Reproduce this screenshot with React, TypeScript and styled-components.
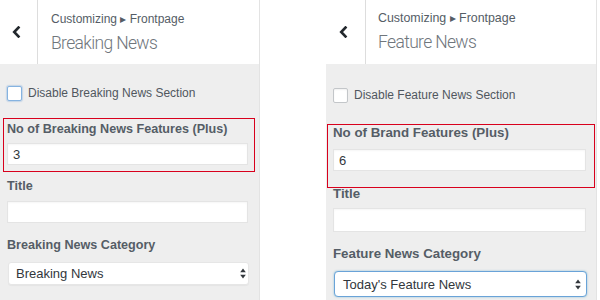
import React from "react";
import styled, { createGlobalStyle } from "styled-components";

const Global = createGlobalStyle`
  html, body { margin: 0; padding: 0; background: #fff; }
  body { font-family: "Liberation Sans", Arial, sans-serif; }
  * { box-sizing: border-box; }
`;

const Page = styled.div`
  display: flex;
  align-items: flex-start;
  width: 600px;
  height: 300px;
  overflow: hidden;
  background: #fff;
`;

const Panel = styled.section<{ $w: number; $ml: number }>`
  width: ${(p) => p.$w}px;
  margin-left: ${(p) => p.$ml}px;
  height: 300px;
  flex: none;
  display: flex;
  flex-direction: column;
  background: #eeeeee;
  border-right: 1px solid #e3e3e3;
  font-family: "Liberation Sans", Arial, sans-serif;
  color: #50575e;
`;

const Header = styled.header`
  height: 64px;
  flex: none;
  display: flex;
  background: #fff;
`;

const BackButton = styled.div<{ $w: number; $pr: number; $pt: number }>`
  width: ${(p) => p.$w}px;
  flex: none;
  display: flex;
  align-items: center;
  justify-content: center;
  padding-right: ${(p) => p.$pr}px;
  padding-top: ${(p) => p.$pt}px;
  border-right: 1px solid #dddddd;
`;

const TitleBlock = styled.div<{ $pl: number; $pt: number }>`
  display: flex;
  flex-direction: column;
  padding-left: ${(p) => p.$pl}px;
  padding-top: ${(p) => p.$pt}px;
`;

const Crumb = styled.div<{ $fs: number }>`
  font-size: ${(p) => p.$fs}px;
  line-height: 16px;
  color: #555d66;
`;

const Heading = styled.h2`
  margin: 4px 0 0;
  font-family: Roboto, "Liberation Sans", sans-serif;
  font-weight: 300;
  font-size: 17.5px;
  line-height: 24px;
  color: #70767c;
  letter-spacing: -0.65px;
`;

const Body = styled.div<{ $pr: number }>`
  display: flex;
  flex-direction: column;
  padding: 0 ${(p) => p.$pr}px 0 7px;
`;

const CheckRow = styled.label<{ $mt: number }>`
  display: flex;
  align-items: center;
  gap: 6px;
  margin-top: ${(p) => p.$mt}px;
  font-size: 12px;
  line-height: 16px;
  color: #50575e;
`;

const CheckBox = styled.span<{ $focus: boolean }>`
  width: 15px;
  height: 15px;
  flex: none;
  background: #fff;
  border: 1px solid ${(p) => (p.$focus ? "#86b3e0" : "#c3c6c9")};
  border-radius: 2px;
  box-shadow: ${(p) => (p.$focus ? "0 0 1px 1px rgba(120,170,220,.35)" : "inset 0 1px 2px rgba(0,0,0,.06)")};
`;

const Highlight = styled.div<{ $mt: number; $ml: number; $mr: number; $p: string }>`
  display: flex;
  flex-direction: column;
  margin-top: ${(p) => p.$mt}px;
  margin-left: ${(p) => p.$ml}px;
  margin-right: ${(p) => p.$mr}px;
  padding: ${(p) => p.$p};
  border-width: 1px;
  border-style: solid;
  border-color: #d8001c;
`;

const FieldLabel = styled.div<{ $fs: number; $mt: number }>`
  margin-top: ${(p) => p.$mt}px;
  font-size: ${(p) => p.$fs}px;
  font-weight: 700;
  line-height: 16px;
  color: #555d66;
  white-space: nowrap;
`;

const TextInput = styled.input<{ $h: number; $mt: number }>`
  display: block;
  width: 100%;
  height: ${(p) => p.$h}px;
  margin: ${(p) => p.$mt}px 0 0;
  padding: 0 5px;
  border: 1px solid #e4e4e4;
  border-radius: 0;
  background: #fff;
  box-shadow: inset 0 1px 2px rgba(0, 0, 0, 0.04);
  font-family: "Liberation Sans", Arial, sans-serif;
  font-size: 13px;
  color: #32373c;
  outline: none;
`;

const SelectBox = styled.div<{ $h: number; $mt: number; $pl: number; $pr: number; $focus: boolean }>`
  display: flex;
  align-items: center;
  justify-content: space-between;
  height: ${(p) => p.$h}px;
  margin: ${(p) => p.$mt}px -1px 0 1px;
  padding: 0 ${(p) => p.$pr}px 0 ${(p) => p.$pl}px;
  background: #fff;
  border: 1px solid ${(p) => (p.$focus ? "#6aa3d8" : "#e6e6e6")};
  border-radius: ${(p) => (p.$focus ? 4 : 3)}px;
  box-shadow: ${(p) => (p.$focus ? "0 0 2px rgba(30,140,190,.5)" : "0 1px 1px rgba(0,0,0,.04)")};
  font-size: 13px;
  color: #32373c;
`;

const Chevron = () => (
  <svg width="9" height="12" viewBox="0 0 9 12">
    <polyline points="6.5,1.5 2.2,6 6.5,10.5" fill="none" stroke="#23282d" strokeWidth="2.6" strokeLinecap="square" strokeLinejoin="miter" />
  </svg>
);

const UpDown = () => (
  <svg width="6" height="11" viewBox="0 0 6 11">
    <polygon points="3,0.5 5.8,4.3 0.2,4.3" fill="#32373c" />
    <polygon points="3,10.5 5.8,6.7 0.2,6.7" fill="#32373c" />
  </svg>
);

type Cfg = {
  w: number;
  ml: number;
  backW: number;
  backPr: number;
  backPt: number;
  titlePl: number;
  titlePt: number;
  crumbFs: number;
  heading: string;
  bodyPr: number;
  checkMt: number;
  checkFocus: boolean;
  checkLabel: string;
  hlMt: number;
  hlMl: number;
  hlMr: number;
  hlP: string;
  labelFs: number;
  countLabel: string;
  countInputMt: number;
  countValue: string;
  titleMt: number;
  inputH: number;
  titleInputMt: number;
  catLabel: string;
  catMt: number;
  selMt: number;
  selH: number;
  selPl: number;
  selPr: number;
  selFocus: boolean;
  selValue: string;
};

const CustomizerPanel = ({ c }: { c: Cfg }) => (
  <Panel $w={c.w} $ml={c.ml}>
    <Header>
      <BackButton $w={c.backW} $pr={c.backPr} $pt={c.backPt}>
        <Chevron />
      </BackButton>
      <TitleBlock $pl={c.titlePl} $pt={c.titlePt}>
        <Crumb $fs={c.crumbFs}>Customizing ▸ Frontpage</Crumb>
        <Heading>{c.heading}</Heading>
      </TitleBlock>
    </Header>
    <Body $pr={c.bodyPr}>
      <CheckRow $mt={c.checkMt}>
        <CheckBox $focus={c.checkFocus} />
        <span>{c.checkLabel}</span>
      </CheckRow>
      <Highlight $mt={c.hlMt} $ml={c.hlMl} $mr={c.hlMr} $p={c.hlP}>
        <FieldLabel $fs={c.labelFs} $mt={0}>{c.countLabel}</FieldLabel>
        <TextInput $h={22} $mt={c.countInputMt} defaultValue={c.countValue} readOnly />
      </Highlight>
      <FieldLabel $fs={c.labelFs} $mt={c.titleMt}>Title</FieldLabel>
      <TextInput $h={c.inputH} $mt={c.titleInputMt} defaultValue="" readOnly />
      <FieldLabel $fs={c.labelFs} $mt={c.catMt}>{c.catLabel}</FieldLabel>
      <SelectBox $h={c.selH} $mt={c.selMt} $pl={c.selPl} $pr={c.selPr} $focus={c.selFocus}>
        <span>{c.selValue}</span>
        <UpDown />
      </SelectBox>
    </Body>
  </Panel>
);

const left: Cfg = {
  w: 260,
  ml: 0,
  backW: 38,
  backPr: 4,
  backPt: 0,
  titlePl: 13,
  titlePt: 11,
  crumbFs: 12,
  heading: "Breaking News",
  bodyPr: 11,
  checkMt: 21,
  checkFocus: true,
  checkLabel: "Disable Breaking News Section",
  hlMt: 17,
  hlMl: -4,
  hlMr: -7,
  hlP: "2px 6px 6px 3px",
  labelFs: 12.6,
  countLabel: "No of Breaking News Features (Plus)",
  countInputMt: 6,
  countValue: "3",
  titleMt: 6,
  inputH: 22,
  titleInputMt: 7,
  catLabel: "Breaking News Category",
  catMt: 14,
  selMt: 9,
  selH: 23,
  selPl: 7,
  selPr: 2,
  selFocus: false,
  selValue: "Breaking News",
};

const right: Cfg = {
  w: 271,
  ml: 66,
  backW: 40,
  backPr: 5,
  backPt: 0,
  titlePl: 12,
  titlePt: 10,
  crumbFs: 12.4,
  heading: "Feature News",
  bodyPr: 10,
  checkMt: 23,
  checkFocus: false,
  checkLabel: "Disable Feature News Section",
  hlMt: 21,
  hlMl: -6,
  hlMr: -9,
  hlP: "0 8px 16px 5px",
  labelFs: 13.3,
  countLabel: "No of Brand Features (Plus)",
  countInputMt: 8,
  countValue: "6",
  titleMt: -2,
  inputH: 24,
  titleInputMt: 6,
  catLabel: "Feature News Category",
  catMt: 14,
  selMt: 9,
  selH: 26,
  selPl: 8,
  selPr: 5,
  selFocus: true,
  selValue: "Today's Feature News",
};

export default function App() {
  return (
    <>
      <Global />
      <Page>
        <CustomizerPanel c={left} />
        <CustomizerPanel c={right} />
      </Page>
    </>
  );
}
